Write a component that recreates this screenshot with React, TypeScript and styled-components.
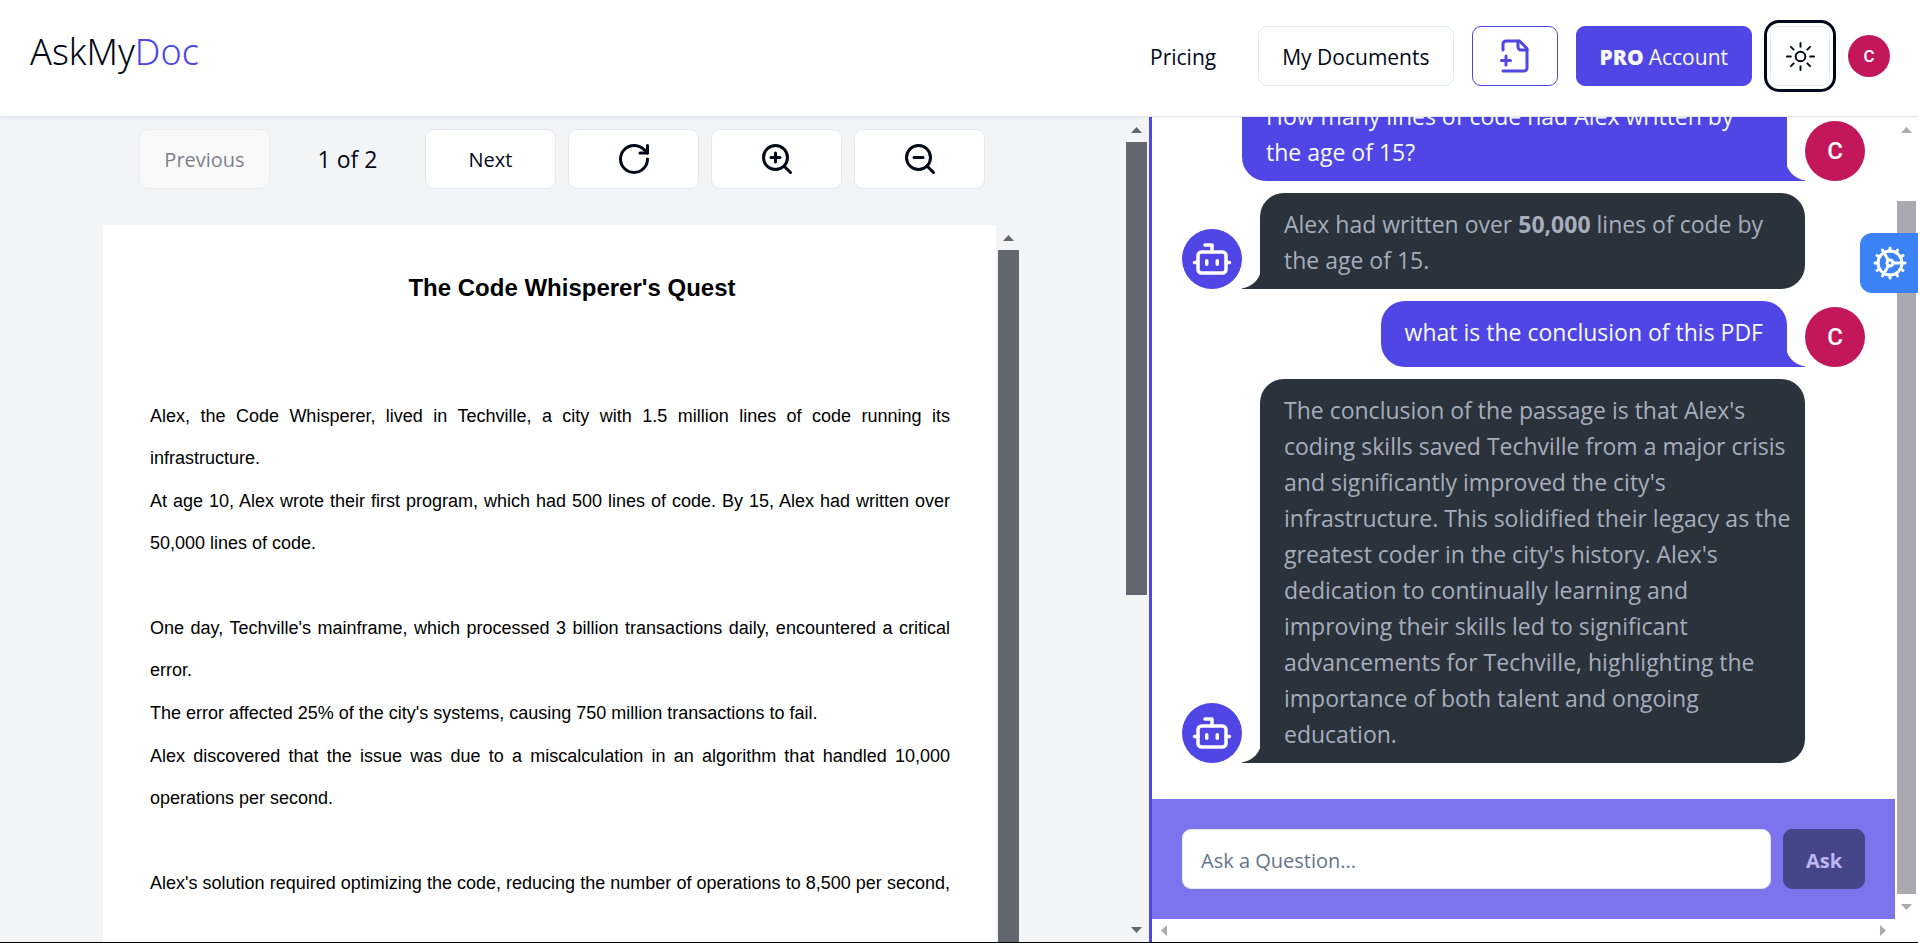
import React from "react";
import styled, { createGlobalStyle, css } from "styled-components";

const color = {
  brand: "#4f46e5",
  ink: "#020817",
  line: "#e2e8f0",
  pane: "#f3f4f6",
  bot: "#2a323c",
  botText: "#a6adbb",
  rose: "#c2185b",
  darkThumb: "#63676f",
  lightThumb: "#a9a9af",
};

const GlobalStyle = createGlobalStyle`
  *, *::before, *::after { box-sizing: border-box; }
  html, body, #root { height: 100%; margin: 0; }
  body {
    background: #fff;
    color: ${color.ink};
    font-family: "Segoe UI", "Open Sans", sans-serif;
    font-size: 20px;
    overflow: hidden;
  }
  button, input { font: inherit; color: inherit; }
  h1, p { margin: 0; }
`;

/* ---------- frame ---------- */

const Page = styled.div`
  position: relative;
  display: flex;
  flex-direction: column;
  height: 100%;
  border-bottom: 1px solid #000;
`;

const Header = styled.header`
  position: relative;
  z-index: 1;
  flex: none;
  display: flex;
  align-items: center;
  justify-content: space-between;
  padding: 26px 28px 30px 30px;
  background: #fff;
  border-bottom: 1px solid ${color.line};
  box-shadow: 0 1px 4px rgba(0, 0, 0, 0.06);
`;

const Logo = styled.a`
  margin-bottom: 8px;
  color: ${color.ink};
  font-family: "Segoe UI", "Noto Sans", sans-serif;
  font-size: 36px;
  font-weight: 300;
  line-height: 48px;
  text-decoration: none;

  span { color: ${color.brand}; }
`;

const Nav = styled.nav`
  display: flex;
  align-items: center;
  gap: 18px;
  font-size: 21px;
  font-weight: 500;
`;

const NavLink = styled.a`
  padding: 2px 24px 0;
  color: ${color.ink};
  text-decoration: none;
`;

const Button = styled.button<{ $tone?: "plain" | "outline" | "solid" }>`
  display: inline-flex;
  align-items: center;
  justify-content: center;
  gap: 5px;
  min-width: 86px;
  height: 60px;
  padding: 2px 23px 0;
  border: 1px solid ${color.line};
  border-radius: 9px;
  background: #fff;
  font-weight: 500;
  white-space: nowrap;

  ${({ $tone }) =>
    $tone === "outline" &&
    css`
      padding-top: 0;
      border-color: ${color.brand};
      color: ${color.brand};
    `}
  ${({ $tone }) =>
    $tone === "solid" &&
    css`
      border-color: ${color.brand};
      background: ${color.brand};
      color: #f8fafc;
    `}
  &:disabled { opacity: 0.5; }
  strong { font-weight: 800; }
`;

const ThemeButton = styled(Button)`
  width: 60px;
  min-width: 0;
  padding: 0;
  outline: 3px solid ${color.ink};
  outline-offset: 3px;
`;

const Avatar = styled.span<{ $size: number; $bg: string }>`
  flex: none;
  display: inline-flex;
  align-items: center;
  justify-content: center;
  width: ${({ $size }) => $size}px;
  height: ${({ $size }) => $size}px;
  border-radius: 50%;
  background: ${({ $bg }) => $bg};
  color: #fff;
  font-family: Roboto, sans-serif;
  font-size: ${({ $size }) => ($size > 50 ? 24 : 17)}px;
  font-weight: 500;
`;

const Main = styled.main`
  flex: 1;
  min-height: 0;
  display: grid;
  grid-template-columns: 1149fr 769fr;
`;

/* ---------- scroll bars ---------- */

const Bar = styled.div<{ $width: number; $color: string }>`
  flex: none;
  display: flex;
  flex-direction: column;
  width: ${({ $width }) => $width}px;
  padding: 0 2px;
  color: ${({ $color }) => $color};
`;

const BarThumb = styled.div<{ $grow: number }>`
  flex: ${({ $grow }) => $grow} 0 0;
  background: currentColor;
`;

const BarGap = styled.div<{ $grow: number }>`
  flex: ${({ $grow }) => $grow} 0 0;
`;

const ArrowCell = styled.div<{ $side?: boolean }>`
  flex: none;
  display: flex;
  align-items: center;
  justify-content: center;
  width: ${({ $side }) => ($side ? "24px" : "auto")};
  height: ${({ $side }) => ($side ? "auto" : "25px")};
`;

const SideBar = styled.div`
  grid-column: 1 / -1;
  display: flex;
  justify-content: space-between;
  height: 23px;
  padding-right: 23px;
  color: ${color.lightThumb};
`;

const arrows = {
  up: [11, 6, "M0 6 5.500 0 11 6Z"],
  down: [11, 6, "M0 0 5.500 6 11 0Z"],
  left: [6, 11, "M6 0 0 5.500 6 11Z"],
  right: [6, 11, "M0 0 6 5.500 0 11Z"],
} as const;

const Arrow = ({ dir }: { dir: keyof typeof arrows }) => {
  const [w, h, d] = arrows[dir];
  return (
    <ArrowCell $side={dir === "left" || dir === "right"}>
      <svg width={w} height={h} viewBox={`0 0 ${w} ${h}`} aria-hidden="true">
        <path d={d} fill="currentColor" />
      </svg>
    </ArrowCell>
  );
};

const ScrollBar = (p: {
  width: number;
  tone: string;
  before: number;
  thumb: number;
  after: number;
  open?: boolean;
}) => (
  <Bar $width={p.width} $color={p.tone} aria-hidden="true">
    <Arrow dir="up" />
    <BarGap $grow={p.before} />
    <BarThumb $grow={p.thumb} />
    <BarGap $grow={p.after} />
    {!p.open && <Arrow dir="down" />}
  </Bar>
);

/* ---------- document pane ---------- */

const DocPane = styled.section`
  display: flex;
  min-width: 0;
  min-height: 0;
  background: ${color.pane};
`;

const DocBody = styled.div`
  flex: 1;
  min-width: 0;
  display: flex;
  flex-direction: column;
  gap: 36px;
  padding: 12px 103px 0;
  overflow: hidden;
`;

const Toolbar = styled.div`
  flex: none;
  display: grid;
  grid-template-columns: repeat(6, 1fr);
  align-items: center;
  gap: 12px;
  padding: 0 36px;
`;

const ToolButton = styled(Button)`
  padding: 0;
`;

const PageCount = styled.span`
  font-size: 23px;
  text-align: center;
`;

const Viewer = styled.div`
  flex: 1;
  min-height: 0;
  display: flex;
`;

const Sheet = styled.article`
  flex: 1;
  min-width: 0;
  padding: 49px 46px 0 47px;
  background: #fff;
  color: #000;
  font-family: Arial, "Liberation Sans", sans-serif;
  font-size: 18px;
  line-height: 42px;
  overflow: hidden;
`;

const SheetTitle = styled.h1`
  margin-bottom: 93px;
  padding-left: 44px;
  font-size: 24px;
  font-weight: 700;
  line-height: 28px;
  text-align: center;
`;

const Passage = styled.div`
  padding-bottom: 42px;
`;

const Paragraph = styled.p<{ $continues?: boolean }>`
  margin-bottom: 1px;
  text-align: justify;
  text-align-last: ${({ $continues }) => ($continues ? "justify" : "auto")};
`;

/* ---------- chat pane ---------- */

const ChatPane = styled.section`
  display: grid;
  grid-template-columns: minmax(0, 1fr) auto;
  grid-template-rows: minmax(0, 1fr) auto;
  min-height: 0;
  border-left: 3px solid ${color.brand};
  background: #fff;
`;

const ChatColumn = styled.div`
  grid-row: 1;
  display: flex;
  flex-direction: column;
  justify-content: flex-end;
  min-height: 0;
  overflow: hidden;
`;

const Messages = styled.div`
  flex: 1;
  min-height: 0;
  display: flex;
  flex-direction: column;
  justify-content: flex-end;
  gap: 12px;
  padding: 0 30px 36px;
`;

const Message = styled.div<{ $mine?: boolean }>`
  flex: none;
  display: flex;
  flex-direction: ${({ $mine }) => ($mine ? "row-reverse" : "row")};
  align-items: flex-end;
  gap: 18px;
  padding-${({ $mine }) => ($mine ? "left" : "right")}: 60px;
`;

const Bubble = styled.div<{ $mine?: boolean }>`
  position: relative;
  min-height: 66px;
  padding: 13px ${({ $mine }) => ($mine ? 24 : 12)}px 11px 24px;
  border-radius: 24px;
  font-size: 23px;
  line-height: 36px;

  ${({ $mine }) =>
    $mine
      ? css`
          border-bottom-right-radius: 0;
          background: ${color.brand};
          color: #f8fafc;
        `
      : css`
          border-bottom-left-radius: 0;
          background: ${color.bot};
          color: ${color.botText};
        `}

  &::after {
    content: "";
    position: absolute;
    bottom: 0;
    ${({ $mine }) => ($mine ? "left" : "right")}: 100%;
    width: 18px;
    height: 18px;
    background: radial-gradient(
      circle at ${({ $mine }) => ($mine ? "calc(100% + 3px)" : "-3px")} -5px,
      transparent 22px,
      ${({ $mine }) => ($mine ? color.brand : color.bot)} 23px
    );
  }
`;

const AskForm = styled.form`
  flex: none;
  display: flex;
  gap: 12px;
  padding: 30px;
  background: #7c74ec;
`;

const Question = styled.input`
  flex: 1;
  min-width: 0;
  height: 60px;
  padding: 2px 18px 0;
  border: 1px solid ${color.line};
  border-radius: 9px;
  background: #fff;

  &::placeholder { color: #64748b; opacity: 1; }
`;

const AskButton = styled(Button)`
  width: 82px;
  min-width: 0;
  padding: 2px 0 0;
  border-color: #0f172a;
  background: #0f172a;
  color: #f8fafc;
  font-weight: 700;
`;

const SettingsTab = styled.button`
  position: absolute;
  z-index: 2;
  top: 233px;
  right: 0;
  display: flex;
  align-items: center;
  width: 58px;
  height: 60px;
  padding: 0 10px 0 12px;
  border: 0;
  border-radius: 12px 0 0 12px;
  background: #3b82f6;
  color: #fff;
`;

/* ---------- icons ---------- */

const Icon = ({ size = 36, children }: { size?: number; children: React.ReactNode }) => (
  <svg
    width={size}
    height={size}
    viewBox="0 0 24 24"
    fill="none"
    stroke="currentColor"
    strokeWidth="2"
    strokeLinecap="round"
    strokeLinejoin="round"
    aria-hidden="true"
  >
    {children}
  </svg>
);

const FilePlusIcon = () => (
  <Icon>
    <path d="M4 22h14a2 2 0 0 0 2-2V7l-5-5H6a2 2 0 0 0-2 2v4" />
    <path d="M14 2v4a2 2 0 0 0 2 2h4M3 15h6M6 12v6" />
  </Icon>
);

const SunIcon = () => (
  <svg width="29" height="29" viewBox="0 0 15 15" fill="none" stroke="currentColor" strokeLinecap="round" aria-hidden="true">
    <circle cx="7.5" cy="7.5" r="2.5" />
    <path d="M7.500 .5v2M7.500 12.500v2M.5 7.500h2M12.500 7.500h2M2.550 2.550l1.410 1.410M11.040 11.040l1.410 1.410M2.550 12.450l1.410-1.410M11.040 3.960l1.410-1.410" />
  </svg>
);

const RotateIcon = () => (
  <Icon>
    <path d="M21 12a9 9 0 1 1-9-9c2.520 0 4.930 1 6.740 2.740L21 8" />
    <path d="M21 3v5h-5" />
  </Icon>
);

const ZoomIcon = ({ plus }: { plus?: boolean }) => (
  <Icon>
    <circle cx="11" cy="11" r="8" />
    <path d="M21 21l-4.350-4.350M8 11h6" />
    {plus && <path d="M11 8v6" />}
  </Icon>
);

const BotIcon = () => (
  <Icon size={42}>
    <path d="M12 8V4H8" />
    <rect width="16" height="12" x="4" y="8" rx="2" />
    <path d="M2 14h2M20 14h2M15 13v2M9 13v2" />
  </Icon>
);

const CogIcon = () => (
  <Icon>
    <circle cx="12" cy="12" r="8" />
    <circle cx="12" cy="12" r="2" />
    <path d="M12 2v2M12 22v-2M17 20.660l-1-1.730M11 10.270L7 3.340M20.660 17l-1.730-1M3.340 7l1.730 1M14 12h8M2 12h2M20.660 7l-1.730 1M3.340 17l1.730-1M17 3.340l-1 1.730M11 13.730l-4 6.930" />
  </Icon>
);

/* ---------- content ---------- */

const passages = [
  [
    "Alex, the Code Whisperer, lived in Techville, a city with 1.5 million lines of code running its infrastructure.",
    "At age 10, Alex wrote their first program, which had 500 lines of code. By 15, Alex had written over 50,000 lines of code.",
  ],
  [
    "One day, Techville's mainframe, which processed 3 billion transactions daily, encountered a critical error.",
    "The error affected 25% of the city's systems, causing 750 million transactions to fail.",
    "Alex discovered that the issue was due to a miscalculation in an algorithm that handled 10,000 operations per second.",
  ],
];

const messages: { mine?: boolean; body: React.ReactNode }[] = [
  { mine: true, body: "How many lines of code had Alex written by the age of 15?" },
  {
    body: (
      <>
        Alex had written over <b>50,000</b> lines of code by the age of 15.
      </>
    ),
  },
  { mine: true, body: "what is the conclusion of this PDF" },
  {
    body: "The conclusion of the passage is that Alex's coding skills saved Techville from a major crisis and significantly improved the city's infrastructure. This solidified their legacy as the greatest coder in the city's history. Alex's dedication to continually learning and improving their skills led to significant advancements for Techville, highlighting the importance of both talent and ongoing education.",
  },
];

export default function App() {
  return (
    <Page>
      <GlobalStyle />
      <Header>
        <Logo href="#">
          AskMy<span>Doc</span>
        </Logo>
        <Nav>
          <NavLink href="#pricing">Pricing</NavLink>
          <Button>My Documents</Button>
          <Button $tone="outline" aria-label="Add document">
            <FilePlusIcon />
          </Button>
          <Button $tone="solid">
            <strong>PRO</strong> Account
          </Button>
          <ThemeButton aria-label="Switch theme">
            <SunIcon />
          </ThemeButton>
          <Avatar $size={42} $bg={color.rose}>C</Avatar>
        </Nav>
      </Header>

      <Main>
        <DocPane>
          <DocBody>
            <Toolbar>
              <ToolButton disabled>Previous</ToolButton>
              <PageCount>1 of 2</PageCount>
              <ToolButton>Next</ToolButton>
              <ToolButton aria-label="Rotate"><RotateIcon /></ToolButton>
              <ToolButton aria-label="Zoom in"><ZoomIcon plus /></ToolButton>
              <ToolButton aria-label="Zoom out"><ZoomIcon /></ToolButton>
            </Toolbar>
            <Viewer>
              <Sheet>
                <SheetTitle>The Code Whisperer's Quest</SheetTitle>
                {passages.map((lines, i) => (
                  <Passage key={i}>
                    {lines.map((line) => (
                      <Paragraph key={line}>{line}</Paragraph>
                    ))}
                  </Passage>
                ))}
                <Paragraph $continues>
                  Alex's solution required optimizing the code, reducing the number of operations to 8,500 per second,
                </Paragraph>
              </Sheet>
              <ScrollBar width={25} tone={color.darkThumb} before={0} thumb={1} after={0} open />
            </Viewer>
          </DocBody>
          <ScrollBar width={25} tone={color.darkThumb} before={0} thumb={453} after={322} />
        </DocPane>

        <ChatPane>
          <ChatColumn>
            <Messages>
              {messages.map(({ mine, body }, i) => (
                <Message key={i} $mine={mine}>
                  <Avatar $size={60} $bg={mine ? color.rose : color.brand}>
                    {mine ? "C" : <BotIcon />}
                  </Avatar>
                  <Bubble $mine={mine}>{body}</Bubble>
                </Message>
              ))}
            </Messages>
            <AskForm>
              <Question type="text" aria-label="Question" placeholder="Ask a Question..." />
              <AskButton type="button" disabled>Ask</AskButton>
            </AskForm>
          </ChatColumn>
          <ScrollBar width={23} tone={color.lightThumb} before={59} thumb={693} after={0} />
          <SideBar aria-hidden="true">
            <Arrow dir="left" />
            <Arrow dir="right" />
          </SideBar>
        </ChatPane>
      </Main>

      <SettingsTab aria-label="Settings">
        <CogIcon />
      </SettingsTab>
    </Page>
  );
}
